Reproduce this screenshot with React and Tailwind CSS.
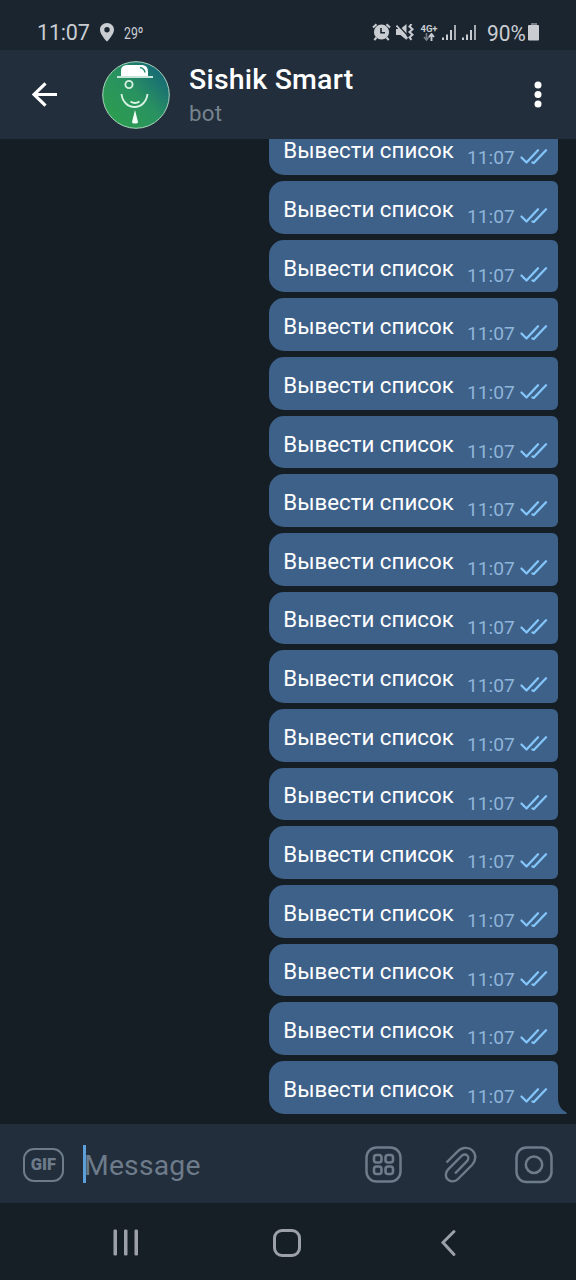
const MESSAGES = Array.from({ length: 17 }, (_, i) => ({
  id: i,
  text: 'Вывести список',
  time: '11:07',
}));

export default function App() {
  return (
    <div className="flex h-[1280px] w-[576px] flex-col overflow-hidden bg-[#151e25] font-['Roboto','Noto_Sans',sans-serif]">
      <StatusBar />
      <Header />
      <main className="flex min-h-0 flex-1 flex-col items-end justify-end gap-[6px] overflow-hidden pr-[18px] pb-[10.500px]">
        {MESSAGES.map((m, i) => (
          <Message key={m.id} text={m.text} time={m.time} last={i === MESSAGES.length - 1} />
        ))}
      </main>
      <Composer />
      <NavBar />
    </div>
  );
}

function StatusBar() {
  return (
    <div className="flex h-[50px] flex-shrink-0 items-start bg-[#1b2530] text-[#c9cdd2]">
      <span className="mt-[20px] ml-[37px] w-[63px] text-[21.500px] leading-[26px] tracking-[-0.200px]">11:07</span>
      <svg width="14" height="20" viewBox="0 0 14 20" className="mt-[23px]" aria-hidden>
        <path
          fillRule="evenodd"
          fill="currentColor"
          d="M7 0C3 0 0 3 0 6.700 0 11.500 7 18.600 7 18.600s7-7.100 7-11.900C14 3 11 0 7 0zm0 4a2.700 2.700 0 1 1 0 5.400A2.700 2.700 0 0 1 7 4z"
        />
      </svg>
      <span className="mt-[24px] ml-[10px] origin-left scale-x-[0.72] text-[17px] leading-[18px]">29º</span>
      <div className="flex-1" />
      <AlarmIcon />
      <MutedIcon />
      <NetworkIcon />
      <SignalIcon />
      <SignalIcon />
      <span className="mt-[20.500px] ml-[6.500px] w-[41px] origin-left scale-x-[0.95] text-[22px] leading-[26px]">90%</span>
      <svg width="12" height="18" viewBox="0 0 12 18" className="mt-[23px] mr-[36px]" aria-hidden>
        <path fill="#747b83" d="M3 0h6v2.500H3z" />
        <rect y="2" width="11" height="15.500" rx="1" fill="currentColor" />
      </svg>
    </div>
  );
}

function AlarmIcon() {
  return (
    <svg width="19" height="18" viewBox="0 0 19 18" className="mt-[23px] mr-[5px]" fill="none" aria-hidden>
      <circle cx="9.500" cy="9" r="6.200" stroke="currentColor" strokeWidth="2.800" />
      <circle cx="9.500" cy="9" r="5.600" fill="currentColor" />
      <path d="M9 5v4.700h4" stroke="#1b2530" strokeWidth="1.600" />
      <path
        d="M1 4.500 4.500 1.200M18 4.500l-3.500-3.300M4.500 14.500l-2.200 2.500M14.500 14.500l2.200 2.500"
        stroke="currentColor"
        strokeWidth="2"
      />
    </svg>
  );
}

function MutedIcon() {
  return (
    <svg width="18" height="18" viewBox="0 0 18 18" className="mt-[23.500px] mr-[6px]" fill="none" aria-hidden>
      <path d="M0 5h4.500L10.500 0v16l-6-5H0z" fill="currentColor" />
      <path d="M2 1 12.500 12.500" stroke="#1b2530" strokeWidth="1.200" />
      <path d="m.5 1.500 11 13" stroke="currentColor" strokeWidth="1.800" />
      <path d="m15.500 0-2 2.600 3 2.700-3 2.700 3 2.700-3 2.600 2 2.500" stroke="currentColor" strokeWidth="2" />
    </svg>
  );
}

function NetworkIcon() {
  return (
    <div className="mt-[24px] mr-[2px] flex w-[19px] flex-col items-center">
      <span className="text-[9.500px] leading-[9px] font-bold whitespace-nowrap">4G+</span>
      <svg width="12" height="9" viewBox="0 0 12 9" fill="none" aria-hidden>
        <path d="M3.500 0v6M1 4l2.500 3L6 4" stroke="#77808a" strokeWidth="1.500" />
        <path d="M8.500 8V1.500M6 4l2.500-3L11 4" stroke="currentColor" strokeWidth="1.900" />
      </svg>
    </div>
  );
}

function SignalIcon() {
  return (
    <svg width="20" height="16" viewBox="0 0 20 16" className="mt-[25px]" fill="currentColor" aria-hidden>
      <path d="M1 12.500h2V15H1zM5 9.500h2V15H5zM9 5h2v10H9z" />
      <path d="M13 0h2v15h-2z" opacity=".8" />
    </svg>
  );
}

function Header() {
  return (
    <header className="flex h-[89px] flex-shrink-0 items-start bg-[#222e3b]">
      <svg width="26" height="26" viewBox="0 0 26 26" className="mt-[32px] ml-[32px]" fill="none" aria-hidden>
        <path d="M25 12.500H2M13.500 1.300 2 12.500l11.500 11.200" stroke="#fff" strokeWidth="3.200" />
      </svg>
      <Avatar />
      <div className="ml-[19px] flex flex-col">
        <h1 className="mt-[13px] text-[28.500px] leading-[34px] font-medium tracking-[0.200px] text-white">
          Sishik Smart
        </h1>
        <span className="mt-[2px] text-[22.300px] leading-[28px] tracking-[0.200px] text-[#76838f]">bot</span>
      </div>
      <svg width="8" height="27" viewBox="0 0 8 27" className="mt-[31px] mr-[34.500px] ml-auto" fill="#fff" aria-hidden>
        <circle cx="4" cy="4" r="3.500" />
        <circle cx="4" cy="13.500" r="3.500" />
        <circle cx="4" cy="23" r="3.500" />
      </svg>
    </header>
  );
}

function Avatar() {
  return (
    <svg width="68" height="68" viewBox="0 0 68 68" className="mt-[10.500px] ml-[44px]" fill="none" aria-hidden>
      <defs>
        <linearGradient id="face" x1="0.15" y1="0.9" x2="0.95" y2="0.15">
          <stop offset="0" stopColor="#2c9d50" />
          <stop offset="0.5" stopColor="#299260" />
          <stop offset="1" stopColor="#146578" />
        </linearGradient>
      </defs>
      <circle cx="34" cy="34" r="33.300" fill="url(#face)" stroke="#a9d6bd" strokeWidth="1" />
      <path d="M19 15V9.500C19 5.500 22 4 26 4h13c5 0 7 2.500 7 7v4z" fill="#fff" />
      <path d="M38 6.500q4.500 1 5 5" stroke="#2b8b70" strokeWidth="1.500" />
      <path d="M15 16h36" stroke="#c5e5da" strokeWidth="2.200" />
      <circle cx="27" cy="23.500" r="3.600" stroke="#d5efe1" strokeWidth="1.900" />
      <path d="M19.500 33c1 8 6.500 13 13 13s12-5 13-13" stroke="#d9f3e4" strokeWidth="1.900" />
      <path d="M28.500 40.500q4.500 3 9 0" stroke="#d9f3e4" strokeWidth="1.900" />
      <path d="m33 49-3 12c0 2 6 2 6 0z" fill="#f1fff6" />
    </svg>
  );
}

function Message({ text, time, last }) {
  return (
    <div
      className={
        last
          ? 'relative flex h-[52.67px] w-[289px] flex-shrink-0 rounded-l-[15px] rounded-tr-[6px] bg-[#3e6189]'
          : 'relative flex h-[52.67px] w-[289px] flex-shrink-0 rounded-l-[15px] rounded-r-[6px] bg-[#3e6189]'
      }
    >
      <span className="mt-[13.900px] ml-[14.300px] w-[183.700px] text-[22.300px] leading-[28px] whitespace-nowrap text-white">
        {text}
      </span>
      <span className="mt-[24px] w-[53px] text-[19.200px] leading-[24px] text-[#8fb5da]">{time}</span>
      <svg width="28" height="16" viewBox="0 0 28 16" className="mt-[27px]" fill="none" aria-hidden>
        <path
          d="m1.500 8.500 5 5L18 1.300M12.500 13.500l1.300.5L26 1.300"
          stroke="#84c5fa"
          strokeWidth="2.300"
          strokeLinecap="round"
          strokeLinejoin="round"
        />
      </svg>
      {last && (
        <svg width="11" height="16" viewBox="0 0 11 16" className="absolute -right-[10px] bottom-0" aria-hidden>
          <path d="M0 0h1c0 7 3 11.500 8.500 14.500.8.500.5 1.500-.5 1.500H0z" fill="#3e6189" />
        </svg>
      )}
    </div>
  );
}

function Composer() {
  return (
    <div className="flex h-[79px] flex-shrink-0 items-start bg-[#222e3b] text-[#6d7b8b]">
      <div className="mt-[24px] ml-[23px] flex h-[34px] w-[41px] items-center justify-center rounded-[11px] border-[2.500px] border-current">
        <span className="mt-px text-[16.500px] leading-none font-black">GIF</span>
      </div>
      <div className="mt-[21px] ml-[19px] h-[38px] w-[3px] bg-[#5d9fd8]" />
      <span className="mt-[25px] -ml-[2px] text-[28.300px] leading-[34px] tracking-[0.200px]">Message</span>
      <svg width="37" height="37" viewBox="0 0 37 37" className="mt-[22px] mr-[40px] ml-auto" fill="none" stroke="currentColor" strokeWidth="2.500" aria-hidden>
        <rect x="1.500" y="1.500" width="34" height="34" rx="10" />
        <g strokeWidth="2.600">
          <rect x="9" y="9" width="7.500" height="7.500" rx="2.500" />
          <rect x="20.500" y="9" width="7.500" height="7.500" rx="2.500" />
          <rect x="9" y="20.500" width="7.500" height="7.500" rx="2.500" />
          <rect x="20.500" y="20.500" width="7.500" height="7.500" rx="2.500" />
        </g>
      </svg>
      <svg width="36" height="38" viewBox="442 1146 36 38" className="mt-[22px] mr-[37px]" fill="none" aria-hidden>
        <path
          d="M446.500 1162.500 457.700 1151.300C461.800 1147.200 468.500 1146.500 472.500 1150.500 476.500 1154.500 476 1160.800 472 1165L458 1179C455 1182 450.500 1182.200 447.700 1179.400 445 1176.700 445.200 1172.300 448.200 1169.300L461.500 1156C463.300 1154.200 465.800 1154 467.300 1155.500 468.800 1157 468.600 1159.500 466.800 1161.300L455 1173.500"
          stroke="currentColor"
          strokeWidth="2.400"
        />
      </svg>
      <svg width="38" height="38" viewBox="0 0 38 38" className="mt-[22px] mr-[23px]" fill="none" stroke="currentColor" strokeWidth="2.500" aria-hidden>
        <rect x="1.500" y="1.500" width="35" height="34.500" rx="10" />
        <circle cx="19" cy="18.700" r="8.200" />
      </svg>
    </div>
  );
}

function NavBar() {
  return (
    <nav className="flex h-[77px] flex-shrink-0 items-start bg-[#161e26] text-[#9ca1a8]">
      <svg width="26" height="27" viewBox="0 0 26 27" className="mt-[26px] ml-[113px]" fill="currentColor" aria-hidden>
        <rect x="0.500" y="0.500" width="3.500" height="26" rx="1.300" />
        <rect x="11" y="0.500" width="3.500" height="26" rx="1.300" />
        <rect x="21.500" y="0.500" width="3.500" height="26" rx="1.300" />
      </svg>
      <div className="mt-[26px] ml-[134px] h-[28px] w-[28px] rounded-[9px] border-[3px] border-current" />
      <svg width="17" height="28" viewBox="0 0 17 28" className="mt-[26px] ml-[139px]" fill="none" aria-hidden>
        <path d="M14 2.500 3 13.500l11 12" stroke="currentColor" strokeWidth="3" strokeLinecap="round" />
      </svg>
    </nav>
  );
}
